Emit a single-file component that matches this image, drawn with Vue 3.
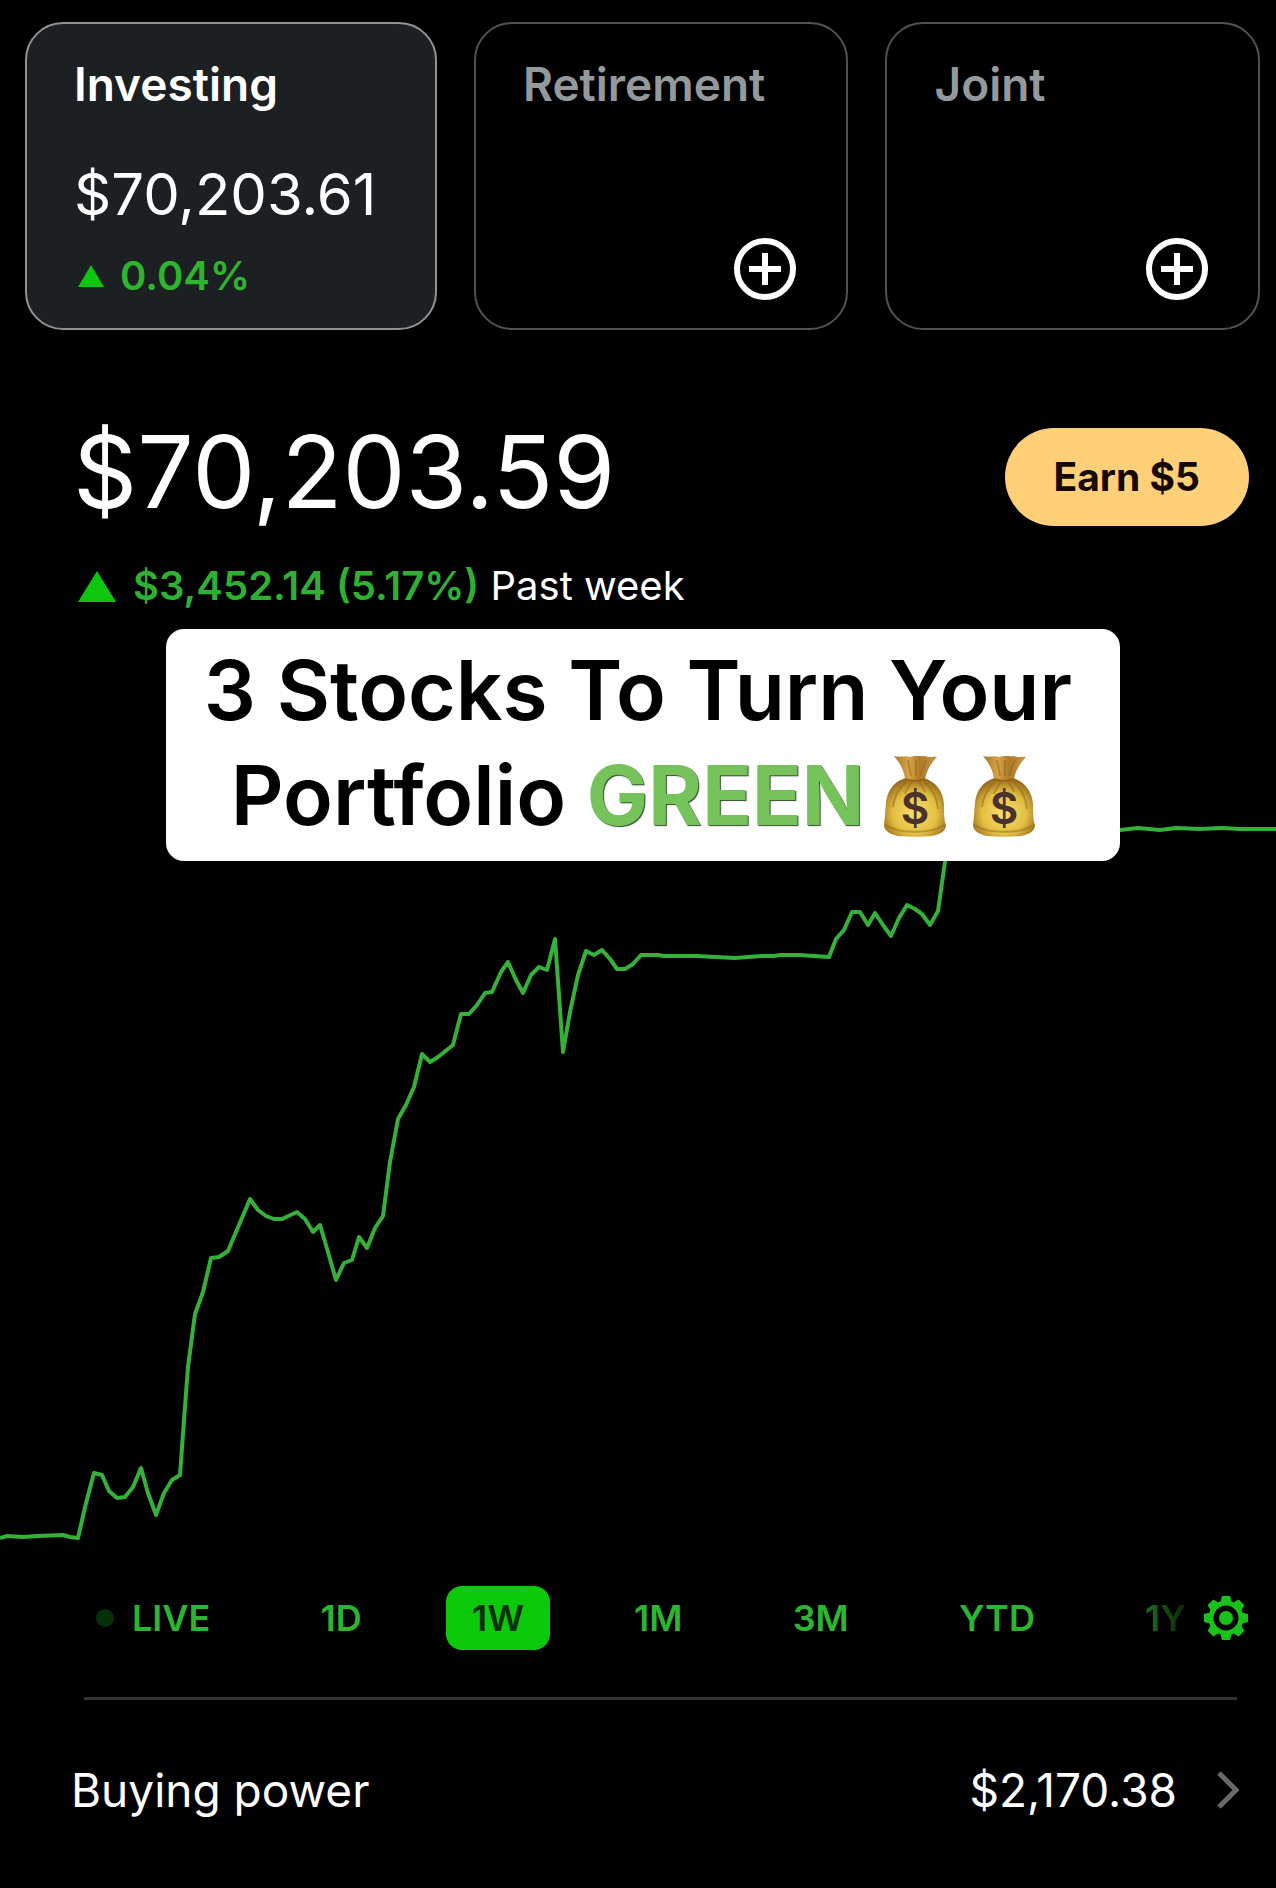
<template>
  <main class="portfolio">
    <section class="accounts">
      <button
        v-for="account in accounts"
        :key="account.name"
        type="button"
        class="account-card"
        :class="{ active: account.amount }"
      >
        <span class="account-name">{{ account.name }}</span>
        <template v-if="account.amount">
          <span class="account-amount">{{ account.amount }}</span>
          <span class="account-change">
            <svg class="triangle-small" viewBox="0 0 26 22"><path d="M13 0L26 22H0Z" /></svg>
            {{ account.change }}
          </span>
        </template>
        <svg v-else class="plus-icon" viewBox="0 0 62 62">
          <circle cx="31" cy="31" r="28" />
          <path d="M31 15V47M15 31H47" />
        </svg>
      </button>
    </section>

    <header class="summary">
      <h1 class="total">$70,203.59</h1>
      <button type="button" class="earn-btn">Earn $5</button>
    </header>

    <p class="week-change">
      <svg class="triangle" viewBox="0 0 38 31"><path d="M19 0L38 31H0Z" /></svg>
      <span><strong>$3,452.14 (5.17%)</strong> Past week</span>
    </p>

    <section class="chart-area">
      <svg class="chart" viewBox="0 610 1276 950">
        <polyline :points="linePoints" />
      </svg>
      <div class="banner">
        <div>3 Stocks To Turn Your</div>
        <div class="banner-line">
          <span>Portfolio <span class="green-word">GREEN</span></span>
          <span class="bags">
            <svg v-for="n in 2" :key="n" class="bag" viewBox="0 0 62 82">
              <defs>
                <radialGradient :id="'bag-body-' + n" cx="50%" cy="60%" r="60%">
                  <stop offset="0" stop-color="#f7e06c" />
                  <stop offset="0.6" stop-color="#e3bf42" />
                  <stop offset="1" stop-color="#94651a" />
                </radialGradient>
                <linearGradient :id="'bag-neck-' + n" x1="0" x2="1" y1="0" y2="0">
                  <stop offset="0" stop-color="#a87426" />
                  <stop offset="0.35" stop-color="#d5a548" />
                  <stop offset="0.6" stop-color="#b07a28" />
                  <stop offset="1" stop-color="#c99a45" />
                </linearGradient>
              </defs>
              <path
                :fill="`url(#bag-body-${n})`"
                d="M22 23C10 26 3 36 2 48C1 57 1 64 0 70C0 76 6 79 14 81C25 82 38 82 48 81C57 79 62 76 62 70C60 65 60 58 60 49C59 36 52 27 40 23Z"
              />
              <path
                :fill="`url(#bag-neck-${n})`"
                d="M10 1C17 3 20 0 26 2C32 0 36 2 41 1C46 3 49 1 53 2C47 8 43 15 41 24C35 26 27 26 21 24C20 15 16 8 10 1Z"
              />
              <path class="fold" d="M24 5L27 21M32 5V21M42 5L36 21M22 27C14 34 10 42 9 52M28 27C25 31 22 35 21 39M40 27C48 33 53 43 54 54M35 27C38 30 40 34 41 37" />
              <path class="tie" d="M21 24C27 26 35 26 41 24" />
              <path class="base" d="M2 70C14 79 48 79 60 70" />
              <text x="31" y="69">$</text>
            </svg>
          </span>
        </div>
      </div>
    </section>

    <nav class="ranges">
      <div class="range-list">
        <button
          v-for="range in ranges"
          :key="range"
          type="button"
          class="range-btn"
          :class="{ selected: range === selectedRange, live: range === 'LIVE', faded: range === '1Y' }"
          @click="selectedRange = range"
        >
          <span v-if="range === 'LIVE'" class="live-dot"></span>{{ range }}
        </button>
      </div>
      <button type="button" class="settings-btn" aria-label="Chart settings">
        <svg viewBox="0 0 44 44">
          <circle cx="22" cy="22" r="15" class="gear-ring" />
          <path v-for="a in 8" :key="a" d="M16 8L18 0H26L28 8Z" :transform="`rotate(${a * 45} 22 22)`" />
          <circle cx="22" cy="22" r="7" />
        </svg>
      </button>
    </nav>

    <hr class="divider" />

    <a href="#" class="buying-power">
      <span>Buying power</span>
      <span class="buying-amount">$2,170.38</span>
      <svg class="chevron" viewBox="0 0 24 38"><path d="M3 2L20 19L3 36" /></svg>
    </a>
  </main>
</template>

<script setup>
import { ref, computed } from 'vue';

const accounts = [
  { name: 'Investing', amount: '$70,203.61', change: '0.04%' },
  { name: 'Retirement' },
  { name: 'Joint' }
];

const ranges = ['LIVE', '1D', '1W', '1M', '3M', 'YTD', '1Y'];
const selectedRange = ref('1W');

const history = [
  [0, 1538], [7, 1536], [23, 1537], [37, 1536], [63, 1535], [70, 1537], [78, 1538], [86, 1503],
  [94, 1473], [102, 1475], [109, 1491], [117, 1498], [125, 1497], [133, 1487], [141, 1468], [148, 1493],
  [156, 1515], [164, 1493], [172, 1480], [180, 1475], [184, 1420], [188, 1367], [195, 1314], [203, 1292],
  [211, 1258], [219, 1257], [228, 1251], [236, 1232], [250, 1199], [258, 1210], [266, 1216], [274, 1219],
  [282, 1219], [297, 1212], [305, 1219], [313, 1232], [320, 1225], [328, 1252], [336, 1280], [344, 1263],
  [352, 1260], [359, 1237], [367, 1248], [375, 1228], [383, 1216], [390, 1162], [398, 1119], [406, 1105],
  [414, 1087], [422, 1054], [430, 1062], [438, 1057], [453, 1045], [461, 1014], [469, 1014], [477, 1005],
  [485, 993], [492, 992], [501, 972], [508, 962], [516, 980], [523, 993], [531, 975], [539, 967],
  [547, 970], [555, 939], [563, 1052], [570, 1012], [578, 975], [586, 951], [594, 955], [602, 950],
  [610, 959], [617, 969], [625, 969], [633, 964], [641, 955], [658, 955], [664, 956], [696, 956],
  [735, 958], [762, 956], [774, 956], [780, 955], [799, 955], [829, 957], [836, 939], [844, 930],
  [852, 912], [860, 912], [868, 925], [875, 913], [883, 925], [891, 936], [899, 918], [907, 905],
  [915, 909], [922, 914], [930, 925], [938, 911], [945, 862], [952, 830], [1120, 830], [1138, 828],
  [1160, 830], [1176, 828], [1200, 829], [1222, 828], [1240, 829], [1276, 829]
];

const linePoints = computed(() => history.map((p) => p.join(',')).join(' '));
</script>

<style>
html,
body {
  margin: 0;
  background: #000;
}
</style>

<style scoped>
.portfolio {
  padding-bottom: 68px;
  background: #000;
  color: #fff;
  font-family: "Inter", "Liberation Sans", sans-serif;
}

button {
  margin: 0;
  padding: 0;
  border: none;
  background: none;
  color: inherit;
  font-family: inherit;
  text-align: left;
  cursor: pointer;
}

svg {
  display: block;
  flex: none;
}

.accounts {
  display: grid;
  grid-template-columns: 11fr 10fr 10fr;
  gap: 37px;
  padding: 22px 16px 0 25px;
}

.account-card {
  display: flex;
  flex-direction: column;
  padding: 32px 50px 28px 47px;
  border: 2px solid #505254;
  border-radius: 38px;
}

.account-card.active {
  padding-right: 0;
  border-color: #8f9294;
  background: #1c2023;
}

.account-name {
  color: #94999c;
  font-size: 46px;
  font-weight: 600;
  line-height: 56px;
}

.active .account-name {
  color: #fff;
}

.account-amount {
  margin-top: 46px;
  font-size: 58px;
  font-weight: 400;
  line-height: 72px;
}

.account-change {
  display: flex;
  align-items: center;
  gap: 16px;
  margin-top: 22px;
  padding-left: 4px;
  color: #2cb52d;
  font-size: 40px;
  font-weight: 600;
  line-height: 48px;
}

.triangle-small {
  width: 26px;
  height: 22px;
  fill: #0fc60f;
}

.plus-icon {
  width: 62px;
  height: 62px;
  margin-top: auto;
  margin-left: auto;
  fill: none;
  stroke: #fff;
  stroke-width: 6;
}

.summary {
  display: flex;
  align-items: flex-end;
  justify-content: space-between;
  padding: 88px 27px 0 73px;
}

.total {
  margin: 0;
  font-size: 100px;
  font-weight: 400;
  line-height: 108px;
}

.earn-btn {
  padding: 25px 49px;
  border-radius: 49px;
  background: #ffd078;
  color: #150800;
  font-size: 39px;
  font-weight: 700;
  line-height: 48px;
}

.week-change {
  display: flex;
  align-items: center;
  gap: 17px;
  margin: 0;
  padding: 36px 27px 0 78px;
  font-size: 40px;
  font-weight: 400;
  line-height: 48px;
}

.week-change strong {
  color: #30b032;
  font-weight: 600;
}

.triangle {
  width: 38px;
  height: 31px;
  fill: #0fc60f;
}

.chart-area {
  position: relative;
}

.chart {
  width: 100%;
  fill: none;
  stroke: #35b038;
  stroke-width: 4;
  stroke-linejoin: round;
}

/* caption laid over the chart */
.banner {
  position: absolute;
  top: 19px;
  right: 156px;
  left: 166px;
  padding: 9px 10px 13px 0;
  border-radius: 18px;
  background: #fff;
  color: #000;
  font-size: 82px;
  font-weight: 600;
  line-height: 105px;
  text-align: center;
  white-space: nowrap;
}

.banner-line {
  display: flex;
  align-items: center;
  justify-content: center;
  gap: 20px;
  padding-right: 10px;
}

.green-word {
  color: #76c35c;
  font-weight: 700;
  text-shadow: 1px 1px 1px #2c4a24;
}

.bags {
  display: flex;
  gap: 27px;
}

.bag {
  width: 62px;
  height: 82px;
}

.bag text {
  fill: #4b332d;
  font-size: 44px;
  font-weight: 600;
  text-anchor: middle;
}

.fold,
.tie,
.base {
  fill: none;
  stroke: #94651a;
  stroke-width: 2;
  opacity: 0.5;
}

.tie {
  opacity: 1;
}

.ranges {
  display: flex;
  align-items: center;
  gap: 18px;
  padding: 26px 28px 0 96px;
}

.range-list {
  display: flex;
  flex: 1;
  justify-content: space-between;
}

.range-btn {
  padding: 8px 26px;
  border-radius: 16px;
  color: #2cb52f;
  font-size: 36px;
  font-weight: 600;
  line-height: 48px;
}

.range-btn.live {
  display: flex;
  align-items: center;
  gap: 18px;
  padding-left: 0;
}

.live-dot {
  width: 18px;
  height: 18px;
  border-radius: 50%;
  background: #04300a;
}

.range-btn.selected {
  background: #0cc90c;
  color: #04300a;
}

.range-btn.faded {
  padding-right: 0;
  mask-image: linear-gradient(to right, rgba(0, 0, 0, 0.9), rgba(0, 0, 0, 0.2));
}

.settings-btn svg {
  width: 44px;
  height: 44px;
  fill: #18c21a;
}

.settings-btn .gear-ring {
  fill: none;
  stroke: #18c21a;
  stroke-width: 5;
}

.divider {
  height: 3px;
  margin: 47px 39px 0 84px;
  border: none;
  background: #333;
}

.buying-power {
  display: flex;
  align-items: center;
  padding: 62px 36px 0 71px;
  color: #fff;
  font-size: 46px;
  font-weight: 400;
  line-height: 56px;
  text-decoration: none;
}

.buying-amount {
  margin-left: auto;
}

.chevron {
  width: 24px;
  height: 38px;
  margin-left: 39px;
  fill: none;
  stroke: #66686a;
  stroke-width: 5;
}
</style>
